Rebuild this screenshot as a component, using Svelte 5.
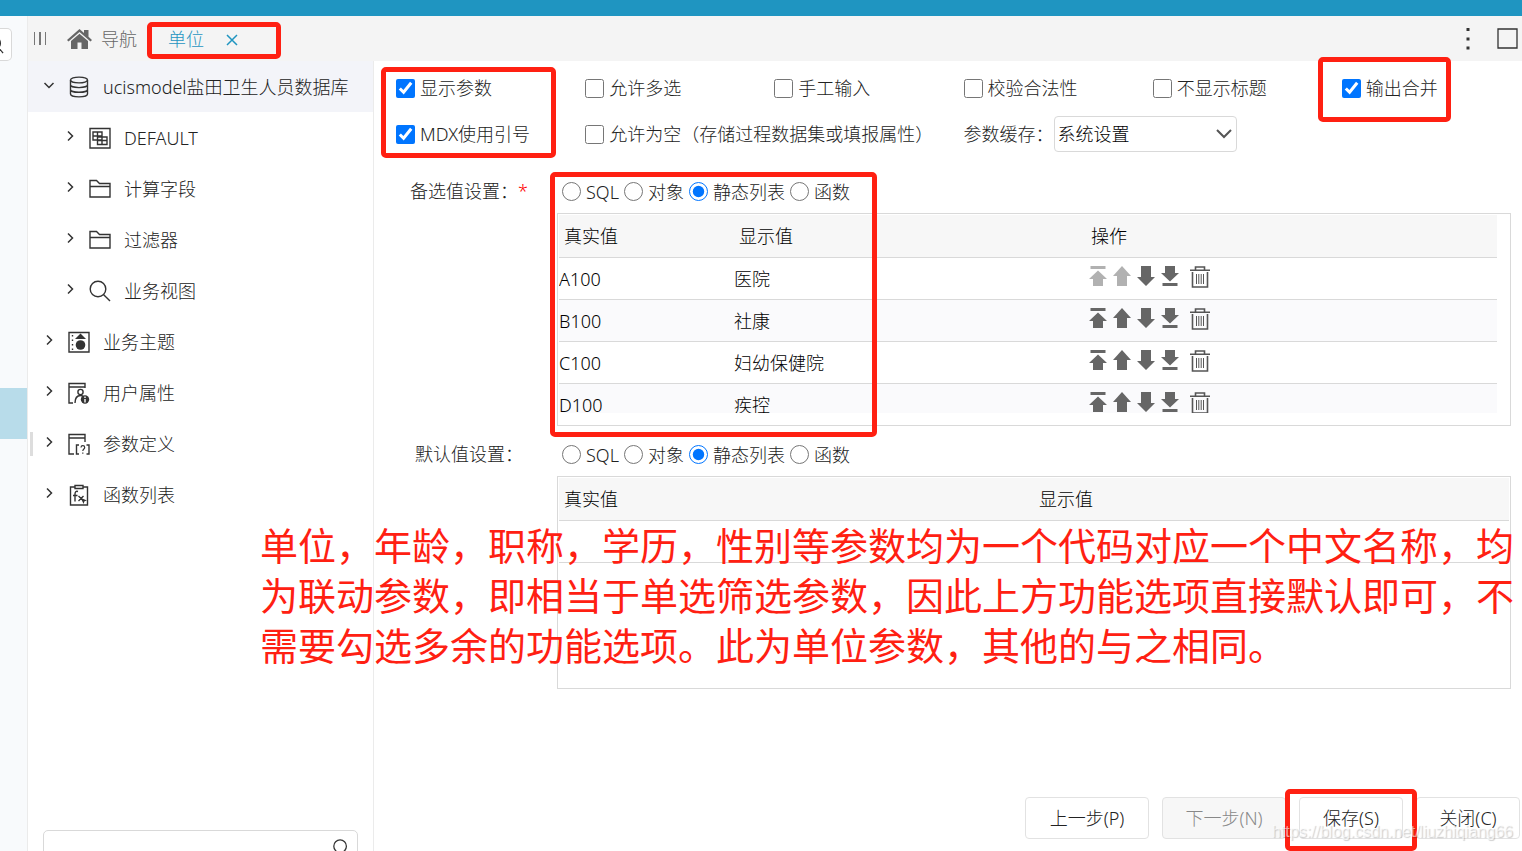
<script lang="ts">
	let treeItems = [
		{ label: 'ucismodel盐田卫生人员数据库', icon: 'database', level: 0, open: true },
		{ label: 'DEFAULT', icon: 'schema', level: 1, open: false },
		{ label: '计算字段', icon: 'folder', level: 1, open: false },
		{ label: '过滤器', icon: 'folder', level: 1, open: false },
		{ label: '业务视图', icon: 'search', level: 1, open: false },
		{ label: '业务主题', icon: 'theme', level: 0, open: false },
		{ label: '用户属性', icon: 'user', level: 0, open: false },
		{ label: '参数定义', icon: 'param', level: 0, open: false },
		{ label: '函数列表', icon: 'func', level: 0, open: false },
	];

	let options = $state([
		{ label: '显示参数', checked: true },
		{ label: '允许多选', checked: false },
		{ label: '手工输入', checked: false },
		{ label: '校验合法性', checked: false },
		{ label: '不显示标题', checked: false },
		{ label: '输出合并', checked: true },
		{ label: 'MDX使用引号', checked: true },
		{ label: '允许为空（存储过程数据集或填报属性）', checked: false, wide: true },
	]);

	const sources = ['SQL', '对象', '静态列表', '函数'];
	let standbySource = $state('静态列表');
	let defaultSource = $state('静态列表');

	let rows = $state([
		{ value: 'A100', label: '医院' },
		{ value: 'B100', label: '社康' },
		{ value: 'C100', label: '妇幼保健院' },
		{ value: 'D100', label: '疾控' },
	]);

	const actions = [
		{ name: '置顶', path: 'M1.500 0h15v3h-15zM9 4.500l9 8.500h-4v7H4v-7H0z', up: true },
		{ name: '上移', path: 'M9 0l9 10h-4v10H4V10H0z', up: true },
		{ name: '下移', path: 'M4 0h10v11h4l-9 9-9-9h4z', up: false },
		{ name: '置底', path: 'M4 0h10v7h4l-9 8.500L0 7h4zM1.500 17h15v3h-15z', up: false },
	];

	function move(index: number, action: string) {
		const target = { 置顶: 0, 上移: index - 1, 下移: index + 1, 置底: rows.length - 1 }[action] ?? index;
		const [row] = rows.splice(index, 1);
		rows.splice(target, 0, row);
	}
</script>

{#snippet treeIcon(name: string)}
	<svg class="icon" viewBox="0 0 22 22" fill="none" stroke="#333" stroke-width="1.400">
		{#if name === 'database'}
			<ellipse cx="11" cy="4" rx="8.500" ry="2.900" />
			<path d="M2.500 4v14c0 1.600 3.800 2.900 8.500 2.900s8.500-1.300 8.500-2.900V4M2.500 8.700c0 1.600 3.800 2.900 8.500 2.900s8.500-1.300 8.500-2.900M2.500 13.400c0 1.600 3.800 2.900 8.500 2.900s8.500-1.300 8.500-2.900" />
		{:else if name === 'schema'}
			<path d="M1 1.500h20v19.500H1zM4 5h9v8H4zM4 9h9M8.500 5v12.500h9.500V10H8.500M13 9v8.500M8.500 13.500H18" />
		{:else if name === 'folder'}
			<path d="M1 2.500h6.500l3 3H21V19H1zM1 8.500h20" />
		{:else if name === 'search'}
			<circle cx="9" cy="9" r="7.800" />
			<path d="M14.700 14.700L21 21" />
		{:else if name === 'theme'}
			<path d="M1 1.500h20v19.500H1z" />
			<path d="M4.500 4v15" stroke-dasharray="1.500 3" />
			<path d="M12.500 2.500L18 8H7z" fill="#333" stroke="none" />
			<circle cx="12.500" cy="14" r="4.800" fill="#333" stroke="none" />
		{:else if name === 'user'}
			<path d="M5 21H1V1.500h16V6M1 5h16" />
			<circle cx="12.500" cy="10" r="2.600" />
			<path d="M7 21c0-4.500 2-7.500 5.500-7.500 1.300 0 2 .3 2.800 1" />
			<circle cx="17" cy="17.500" r="4.200" fill="#333" stroke="none" />
			<path d="M17 14.500v1.500M17 17v3.500" stroke="#fff" />
		{:else if name === 'param'}
			<path d="M6 21H1V1.500h16V9M1 5h16" />
			<path d="M11 12H8.500v9H11M18.500 12H21v9h-2.500" />
			<path d="M13 14.500c0-2.500 3.700-2.500 3.700 0 0 1.500-1.900 1.500-1.900 3.500M14.800 19.500v1.300" stroke-width="1.200" />
		{:else}
			<path d="M7 3H2.500v18h17V3H15M7 1.500h8v3H7z" />
			<path d="M10 7.500c-2-.6-3 .3-3 2.500v7.500M5 11.500h4.500M10.500 12l5 5M15.500 12l-5 5" />
			<path d="M13 14l6 2.500-2.500.8-1 2.700z" fill="#333" stroke="none" />
		{/if}
	</svg>
{/snippet}

{#snippet magnifier()}
	<svg class="magnifier" viewBox="0 0 20 20" fill="none" stroke="#333" stroke-width="1.400">
		<circle cx="9" cy="8" r="7" />
		<path d="M14 13l5 6" />
	</svg>
{/snippet}

<div class="page">
	<div class="topbar"></div>

	<div class="body">
		<div class="rail">
			<button class="rail-search" aria-label="搜索">{@render magnifier()}</button>
			<div class="rail-active"></div>
		</div>

		<div class="workspace">
			<header class="tabs">
				<button class="collapse" aria-label="折叠">
					<svg width="12" height="13" viewBox="0 0 12 13" fill="#777">
						<path d="M0 0h1v13H0zM5 0h2v13H5zM11 0h1v13h-1z" />
					</svg>
				</button>
				<a class="nav" href="#nav">
					<svg width="25" height="20" viewBox="0 0 25 20" fill="#666">
						<path d="M12.500 0L0 11l1.500 1.500 11-9.500 11 9.500L25 11l-3.500-3.200V1H17v3z" />
						<path d="M12.500 4.800L4 12v8h6.500v-6.500h4V20H21v-8z" />
					</svg>
					导航
				</a>
				<span class="divider"></span>
				<a class="tab" href="#unit">单位</a>
				<button class="close" aria-label="关闭标签">
					<svg width="12" height="12" viewBox="0 0 12 12" stroke="#2095c0" stroke-width="1.500">
						<path d="M1 1l10 10M11 1L1 11" />
					</svg>
				</button>
				<div class="window-tools">
					<button aria-label="更多">
						<svg width="4" height="22" viewBox="0 0 4 22" fill="#333">
							<path d="M.5 0h3v3h-3zM.5 9.500h3v3h-3zM.5 18.500h3v3h-3z" />
						</svg>
					</button>
					<button aria-label="最大化">
						<svg width="21" height="21" viewBox="0 0 21 21" fill="none" stroke="#333" stroke-width="1.300">
							<path d="M1 1h19v19H1z" />
						</svg>
					</button>
				</div>
			</header>

			<div class="columns">
				<aside class="sidebar">
					<ul class="tree">
						{#each treeItems as item, i (item.label)}
							<li class="tree-item" class:child={item.level === 1} class:selected={i === 0}>
								<svg class="chevron" viewBox="0 0 12 12" fill="none" stroke="#333" stroke-width="1.500">
									<path d={item.open ? 'M1.500 4L6 8.500 10.500 4' : 'M4 1.500L8.500 6 4 10.500'} />
								</svg>
								{@render treeIcon(item.icon)}
								<span>{item.label}</span>
							</li>
						{/each}
					</ul>
					<span class="grip"></span>
					<div class="search-dock">
						<div class="search-box">
							<input type="text" aria-label="搜索资源" />
							{@render magnifier()}
						</div>
					</div>
				</aside>

				<main class="pane">
					<div class="options">
						{#each options as option (option.label)}
							<label class="option" class:wide={option.wide}>
								<input type="checkbox" bind:checked={option.checked} />
								{option.label}
							</label>
						{/each}
						<div class="cache">
							<label for="cache">参数缓存：</label>
							<div class="select">
								<select id="cache">
									<option>系统设置</option>
									<option>是</option>
									<option>否</option>
								</select>
								<svg width="16" height="10" viewBox="0 0 16 10" fill="none" stroke="#555" stroke-width="2">
									<path d="M1 1l7 7 7-7" />
								</svg>
							</div>
						</div>
					</div>

					<section class="setting">
						<div class="setting-label">备选值设置：<span class="required">*</span></div>
						<div class="setting-content">
							<div class="radios">
								{#each sources as source (source)}
									<label>
										<input type="radio" name="standby" value={source} bind:group={standbySource} />
										{source}
									</label>
								{/each}
							</div>
							<div class="table-box">
								<div class="table-scroll">
									<table>
										<thead>
											<tr>
												<th class="col-value">真实值</th>
												<th class="col-label">显示值</th>
												<th>操作</th>
											</tr>
										</thead>
										<tbody>
											{#each rows as row, i (row.value)}
												<tr>
													<td>{row.value}</td>
													<td>{row.label}</td>
													<td>
														<div class="actions">
															{#each actions as action (action.name)}
																<button
																	aria-label={action.name}
																	disabled={action.up && i === 0}
																	onclick={() => move(i, action.name)}
																>
																	<svg width="18" height="20" viewBox="0 0 18 20" fill="#666">
																		<path d={action.path} />
																	</svg>
																</button>
															{/each}
															<button class="remove" aria-label="删除" onclick={() => rows.splice(i, 1)}>
																<svg width="20" height="22" viewBox="0 0 20 22" fill="none" stroke="#555">
																	<path d="M0 4.300h20M5.500 4V1h9v3M2.500 6v15h15V6" stroke-width="1.600" />
																	<path d="M6.500 8v10M8.800 8v10M11.200 8v10M13.500 8v10" />
																</svg>
															</button>
														</div>
													</td>
												</tr>
											{/each}
										</tbody>
									</table>
								</div>
							</div>
						</div>
					</section>

					<section class="setting">
						<div class="setting-label">默认值设置：</div>
						<div class="setting-content">
							<div class="radios">
								{#each sources as source (source)}
									<label>
										<input type="radio" name="default" value={source} bind:group={defaultSource} />
										{source}
									</label>
								{/each}
							</div>
							<div class="table-box full">
								<table>
									<thead>
										<tr>
											<th>真实值</th>
											<th>显示值</th>
										</tr>
									</thead>
									<tbody>
										<tr>
											<td></td>
											<td></td>
										</tr>
									</tbody>
								</table>
							</div>
						</div>
					</section>

					<footer class="buttons">
						<button class="step">上一步(P)</button>
						<button class="step" disabled>下一步(N)</button>
						<button>保存(S)</button>
						<button>关闭(C)</button>
					</footer>
				</main>
			</div>
		</div>
	</div>

	<!-- red marks and the note drawn over the dialog -->
	<div class="mark mark-tab"></div>
	<div class="mark mark-options"></div>
	<div class="mark mark-merge"></div>
	<div class="mark mark-values"></div>
	<div class="mark mark-save"></div>
	<p class="note">
		单位，年龄，职称，学历，性别等参数均为一个代码对应一个中文名称，均<br />
		为联动参数，即相当于单选筛选参数，因此上方功能选项直接默认即可，不<br />
		需要勾选多余的功能选项。此为单位参数，其他的与之相同。
	</p>
	<span class="watermark">https://blog.csdn.net/liuzhiqiang66</span>
</div>

<style>
	:global(body) {
		margin: 0;
	}

	.page {
		position: relative;
		height: 100vh;
		display: flex;
		flex-direction: column;
		overflow: hidden;
		background: #fff;
		color: #222;
		font-family: 'Noto Sans', 'Noto Sans CJK SC', sans-serif;
		font-size: 18px;
		font-weight: 300;
		line-height: 24px;
	}

	.page * {
		box-sizing: border-box;
	}

	button,
	input,
	select {
		font: inherit;
		color: inherit;
	}

	button {
		padding: 0;
		border: 0;
		background: none;
		cursor: pointer;
	}

	svg {
		display: block;
		flex: none;
	}

	.topbar {
		flex: none;
		height: 16px;
		background: #1f95c1;
	}

	.body {
		flex: 1;
		display: flex;
		min-height: 0;
	}

	/* === LEFT RAIL === */
	.rail {
		flex: none;
		width: 28px;
		padding-top: 12px;
		background: #f8fafc;
		border-right: 1px solid #ebebeb;
	}

	.rail-search {
		display: flex;
		align-items: center;
		justify-content: flex-end;
		width: 12px;
		height: 33px;
		padding-right: 11px;
		overflow: hidden;
		background: #fff;
		border: 1px solid #d9d9d9;
		border-left: 0;
		border-radius: 0 5px 5px 0;
	}

	.rail-active {
		height: 51px;
		margin-top: 327px;
		background: #b8dcea;
	}

	.magnifier {
		width: 18px;
		height: 18px;
	}

	.rail-search .magnifier {
		margin-right: -4px;
	}

	.workspace {
		flex: 1;
		display: flex;
		flex-direction: column;
		min-width: 0;
	}

	/* === TABS === */
	.tabs {
		flex: none;
		display: flex;
		align-items: center;
		height: 45px;
		padding: 0 4px 0 6px;
		background: #f4f4f4;
	}

	.nav {
		display: flex;
		align-items: center;
		gap: 9px;
		margin-left: 21px;
		color: #666;
		text-decoration: none;
	}

	.divider {
		width: 1px;
		height: 12px;
		margin: 0 16px 0 14px;
		background: #bbb;
	}

	.tab {
		color: #1f95c1;
		text-decoration: none;
	}

	.close {
		margin: 3px 0 0 22px;
	}

	.window-tools {
		display: flex;
		align-items: center;
		gap: 27px;
		margin-left: auto;
	}

	.columns {
		flex: 1;
		display: flex;
		min-height: 0;
	}

	/* === TREE === */
	.sidebar {
		position: relative;
		flex: none;
		display: flex;
		flex-direction: column;
		width: 346px;
		border-right: 1px solid #ebebeb;
	}

	.tree {
		flex: 1;
		margin: 0;
		padding: 0;
		list-style: none;
	}

	.tree-item {
		display: flex;
		align-items: center;
		gap: 13px;
		height: 51px;
		padding-left: 15px;
		white-space: nowrap;
	}

	.tree-item.child {
		padding-left: 36px;
	}

	.tree-item.selected {
		background: #f3f4f9;
	}

	.chevron {
		width: 12px;
		height: 12px;
		margin-bottom: 4px;
	}

	.icon {
		width: 22px;
		height: 22px;
	}

	.grip {
		position: absolute;
		left: 2px;
		top: 371px;
		width: 3px;
		height: 24px;
		background: #ddd;
	}

	.search-dock {
		flex: none;
		height: 21px;
		padding: 0 15px;
	}

	.search-box {
		display: flex;
		height: 42px;
		padding: 8px 7px;
		border: 1px solid #d9d9d9;
		border-radius: 5px;
	}

	.search-box input {
		flex: 1;
		min-width: 0;
		padding: 0;
		border: 0;
		outline: 0;
		background: none;
	}

	/* === PARAMETER PANE === */
	.pane {
		flex: 1;
		display: flex;
		flex-direction: column;
		min-width: 0;
		padding-top: 4px;
	}

	.options {
		display: grid;
		grid-template-columns: repeat(5, 21fr) 20fr;
		grid-auto-rows: 46px;
		align-items: center;
		margin-bottom: 13px;
		padding-left: 22px;
	}

	.option {
		display: flex;
		align-items: center;
		gap: 5px;
		min-width: 0;
		white-space: nowrap;
	}

	.option.wide {
		grid-column: span 2;
	}

	input[type='checkbox'],
	input[type='radio'] {
		flex: none;
		width: 19px;
		height: 19px;
		margin: 0;
	}

	.cache {
		grid-column: span 3;
		display: flex;
		align-items: center;
	}

	.select {
		position: relative;
		width: 183px;
	}

	.select select {
		width: 100%;
		height: 36px;
		padding: 0 3px;
		appearance: none;
		background: #fff;
		border: 1px solid #d9d9d9;
		border-radius: 4px;
		color: #000;
	}

	.select svg {
		position: absolute;
		right: 5px;
		top: 13px;
		pointer-events: none;
	}

	.setting {
		display: grid;
		grid-template-columns: 176px minmax(0, 1fr);
		margin-bottom: 7px;
		padding: 0 11px 0 7px;
	}

	.setting-label {
		height: 42px;
		line-height: 42px;
		text-align: center;
	}

	.required {
		color: #f00;
	}

	.radios {
		display: flex;
		align-items: center;
		gap: 5px;
		height: 43px;
		padding-left: 5px;
	}

	.radios label {
		display: flex;
		align-items: center;
		gap: 5px;
	}

	.table-box {
		height: 213px;
		padding: 1px 13px 0 1px;
		border: 1px solid #d9d9d9;
	}

	.table-box.full {
		padding-right: 1px;
	}

	.table-scroll {
		height: 198px;
		overflow: hidden;
	}

	table {
		width: 100%;
		table-layout: fixed;
		border-collapse: separate;
		border-spacing: 0;
		color: #000;
	}

	th,
	td {
		height: 42px;
		padding: 0;
		border-bottom: 1px solid #d9d9d9;
		text-align: left;
		font-weight: 300;
	}

	th {
		height: 43px;
		padding-left: 5px;
		background: #f7f7f7;
	}

	.col-value {
		width: 175px;
	}

	.col-label {
		width: 352px;
	}

	tbody tr:nth-child(even) {
		background: #fafafc;
	}

	.actions {
		display: flex;
		gap: 6px;
		height: 26px;
		padding-left: 3px;
	}

	.actions button {
		display: flex;
		align-items: flex-start;
	}

	.actions button:disabled {
		opacity: 0.5;
	}

	.actions .remove {
		margin-left: 5px;
	}

	.buttons {
		display: flex;
		justify-content: flex-end;
		gap: 13px;
		margin-top: auto;
		padding: 0 2px 12px;
	}

	.buttons button {
		width: 104px;
		height: 42px;
		background: #fff;
		border: 1px solid #e2e2e2;
		border-radius: 4px;
	}

	.buttons .step {
		width: 124px;
	}

	.buttons button:disabled {
		background: #f7f7f7;
		color: #888;
	}

	/* === MARKS === */
	.mark {
		position: absolute;
		border: 5px solid #ff2012;
		border-radius: 5px;
		pointer-events: none;
	}

	.mark-tab {
		left: 147px;
		top: 22px;
		width: 134px;
		height: 37px;
	}

	.mark-options {
		left: 381px;
		top: 67px;
		width: 175px;
		height: 91px;
	}

	.mark-merge {
		right: 71px;
		top: 57px;
		width: 133px;
		height: 65px;
	}

	.mark-values {
		left: 550px;
		top: 172px;
		width: 327px;
		height: 265px;
	}

	.mark-save {
		right: 105px;
		bottom: 0;
		width: 132px;
		height: 62px;
	}

	.note {
		position: absolute;
		left: 260px;
		top: 520px;
		margin: 0;
		color: #ff2012;
		font-size: 38px;
		font-weight: 400;
		line-height: 50px;
		white-space: nowrap;
		pointer-events: none;
	}

	.watermark {
		position: absolute;
		right: 9px;
		bottom: 7px;
		color: rgba(255, 255, 255, 0.6);
		font-family: 'Liberation Sans', sans-serif;
		font-size: 16px;
		font-weight: 400;
		text-shadow: 1px 1px 1px rgba(0, 0, 0, 0.2);
		pointer-events: none;
	}
</style>
